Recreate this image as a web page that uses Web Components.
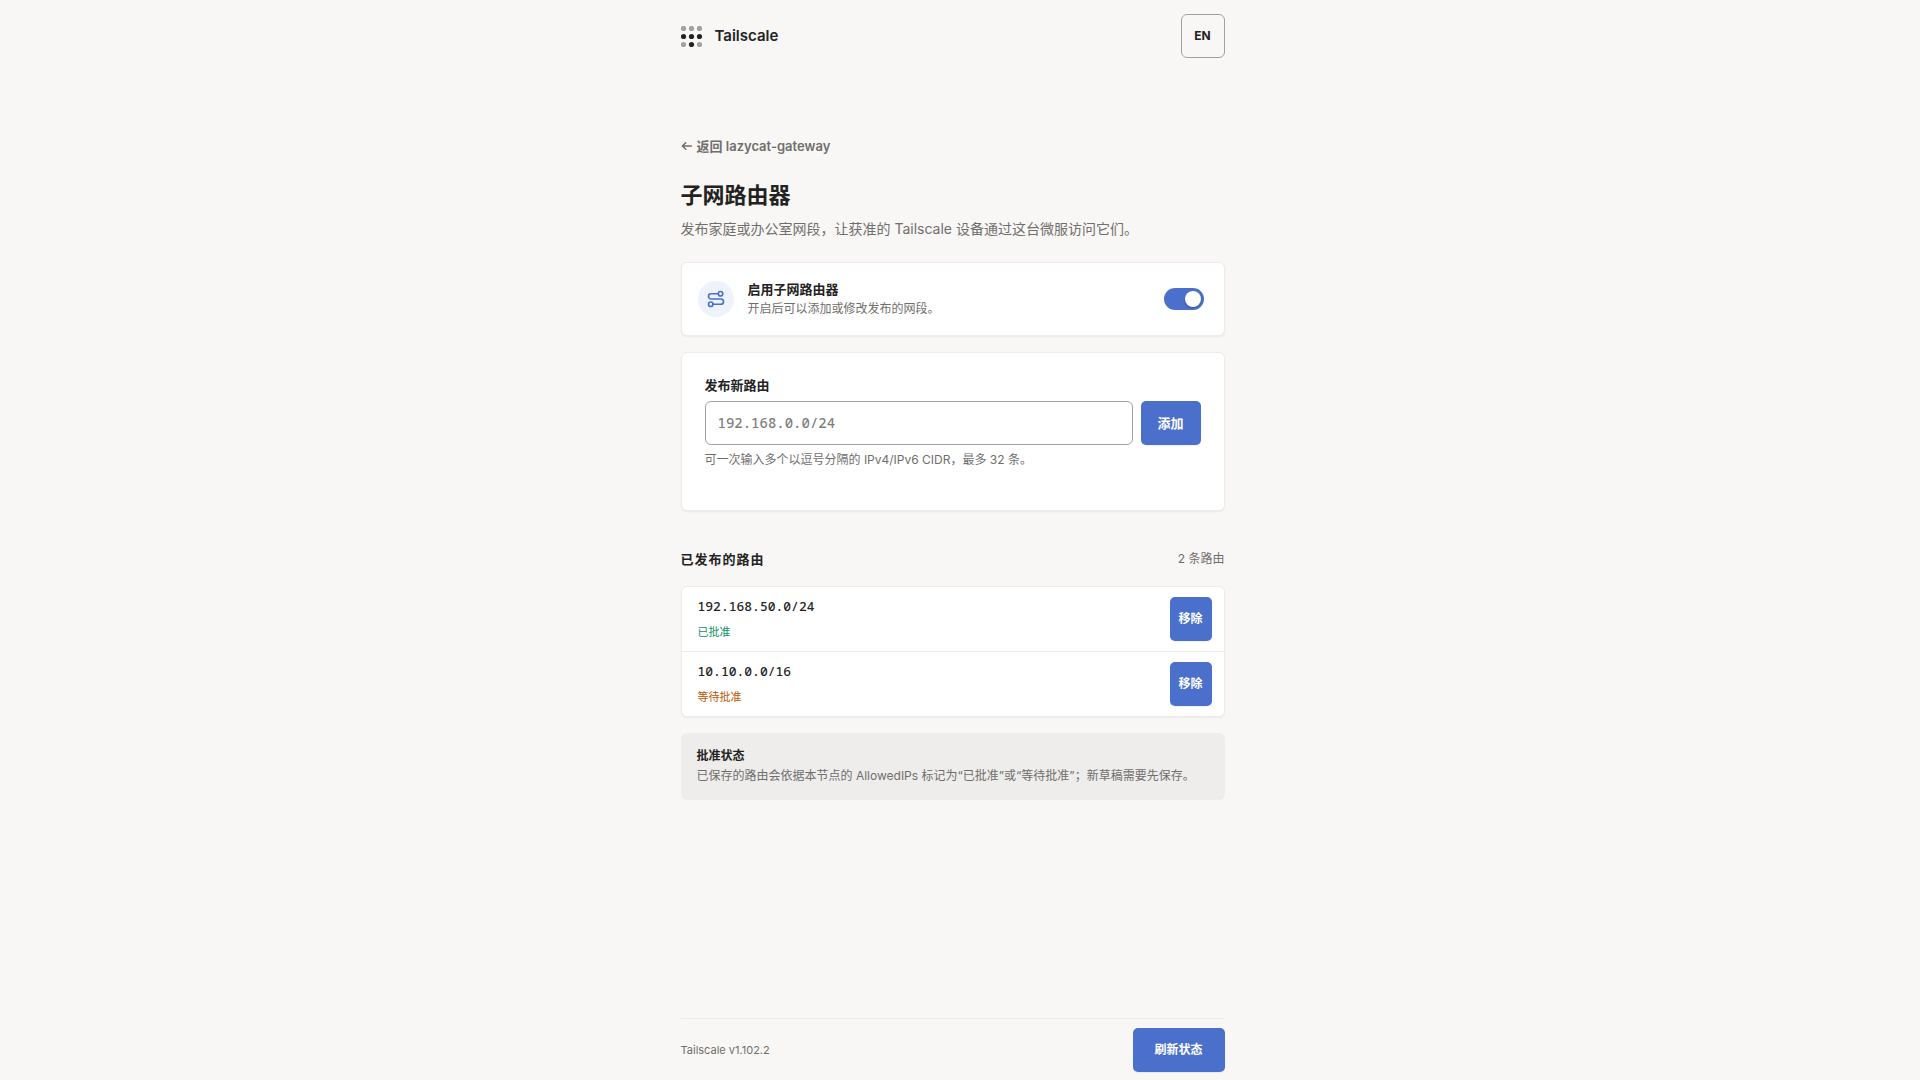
<!DOCTYPE html>
<html lang="zh-CN">
<head>
<meta charset="utf-8">
<meta name="viewport" content="width=device-width, initial-scale=1">
<title>Tailscale</title>
<style>
:root{--bg:#f8f7f5;--text:#232222;--muted:#706e6d;--line:#eeebea;--field:#a3a19f;--blue:#4b70cc;--mono:"Noto Sans Mono","DejaVu Sans Mono",monospace}
html{background:var(--bg)}
body{margin:0;padding-right:15px;background:var(--bg);color:var(--text);font:400 13px/20px Inter,"Noto Sans CJK SC",sans-serif}
</style>
</head>
<body>
<app-shell>
  <top-bar slot="top"></top-bar>
  <page-intro heading="子网路由器">
    <span slot="back">返回 lazycat-gateway</span>
    发布家庭或办公室网段，让获准的 Tailscale 设备通过这台微服访问它们。
  </page-intro>
  <toggle-card heading="启用子网路由器">开启后可以添加或修改发布的网段。</toggle-card>
  <route-form></route-form>
  <route-list heading="已发布的路由" count="2 条路由">
    <route-row cidr="192.168.50.0/24" state="approved">已批准</route-row>
    <route-row cidr="10.10.0.0/16" state="pending">等待批准</route-row>
  </route-list>
  <info-note heading="批准状态">已保存的路由会依据本节点的 AllowedIPs 标记为“已批准”或“等待批准”；新草稿需要先保存。</info-note>
  <page-footer slot="bottom">Tailscale v1.102.2</page-footer>
</app-shell>
<script>
const base = `
*{box-sizing:border-box}
:host{display:block}
h1,h2,p{margin:0}
button{font:600 12px/20px Inter,"Noto Sans CJK SC",sans-serif;height:44px;border:0;border-radius:5px;cursor:pointer}
button.primary{background:var(--blue);color:#fff;box-shadow:0 1px 1px rgba(0,0,0,.06)}
.card{background:#fff;border:1px solid var(--line);border-radius:6px;box-shadow:0 1px 2px rgba(0,0,0,.06)}
`;
function define(name, css, html) {
  customElements.define(name, class extends HTMLElement {
    constructor() {
      super();
      this.attachShadow({mode: 'open'}).innerHTML = `<style>${base}${css}</style>${html(this)}`;
    }
  });
}
const attr = (el, key) => el.getAttribute(key) || '';

define('app-shell', `
:host{display:flex;flex-direction:column;width:min(100% - 32px,544px);min-height:100vh;margin:0 auto}
main{flex:1;display:flex;flex-direction:column;gap:16px;padding:64px 0 32px}
`, () => `<slot name="top"></slot><main><slot></slot></main><slot name="bottom"></slot>`);

define('top-bar', `
header{display:flex;align-items:center;justify-content:space-between;height:72px}
.brand{display:flex;align-items:center;gap:13px;font-size:15px;line-height:22px;font-weight:600}
svg{display:block}
button{width:44px;padding:0;background:transparent;border:1px solid var(--field);border-radius:6px;color:var(--text);font-weight:700}
`, () => `<header><div class="brand">
<svg width="21" height="21" viewBox="0 0 21 21" fill="#232222" aria-hidden="true">
<g opacity=".4"><circle cx="2.5" cy="2.5" r="2.6"/><circle cx="10.5" cy="2.5" r="2.6"/><circle cx="18.5" cy="2.5" r="2.6"/><circle cx="2.5" cy="18.5" r="2.6"/><circle cx="18.5" cy="18.5" r="2.6"/></g>
<circle cx="2.5" cy="10.5" r="2.6"/><circle cx="10.5" cy="10.5" r="2.6"/><circle cx="18.5" cy="10.5" r="2.6"/><circle cx="10.5" cy="18.5" r="2.6"/></svg>
<span>Tailscale</span></div><button type="button">EN</button></header>`);

define('page-intro', `
:host{padding-bottom:6px}
a{display:flex;width:fit-content;align-items:center;gap:4px;color:var(--muted);text-decoration:none;font-weight:600}
h1{margin-top:24px;font-size:22px;line-height:30px;font-weight:700}
p{margin-top:8px;font-size:14px;line-height:22px;color:var(--muted)}
`, el => `<a href="#"><svg width="12" height="12" viewBox="0 0 12 12" fill="none" stroke="currentColor" stroke-width="1.5" stroke-linecap="round" stroke-linejoin="round" aria-hidden="true"><path d="M10.3 6H1.3M4.8 2.7L1.3 6l3.5 3.3"/></svg><slot name="back"></slot></a>
<h1>${attr(el, 'heading')}</h1><p><slot></slot></p>`);

define('toggle-card', `
.card{display:flex;align-items:center;gap:14px;padding:17px 20px 17px 16px}
.icon{display:grid;place-items:center;width:36px;height:36px;border-radius:50%;background:#edf2fb;color:var(--blue)}
label{flex:1}
strong,span{display:block;line-height:19px}
strong{font-weight:600}
span{font-size:12px;color:var(--muted)}
input{appearance:none;display:flex;align-items:center;justify-content:flex-end;width:40px;height:22px;margin:0;padding:3px;border-radius:11px;background:var(--blue);cursor:pointer}
input::before{content:"";width:16px;height:16px;border-radius:50%;background:#fff;box-shadow:0 1px 2px rgba(0,0,0,.25)}
input:not(:checked){justify-content:flex-start;background:var(--field)}
`, el => `<div class="card"><div class="icon"><svg width="18" height="18" viewBox="0 0 24 24" fill="none" stroke="currentColor" stroke-width="2.2" stroke-linecap="round" stroke-linejoin="round" aria-hidden="true"><circle cx="5" cy="19" r="3"/><path d="M8 19h10.500a3.500 3.500 0 0 0 0-7h-13a3.500 3.500 0 0 1 0-7H15"/><circle cx="18" cy="5" r="3"/></svg></div>
<label for="on"><strong>${attr(el, 'heading')}</strong><span><slot></slot></span></label>
<input id="on" type="checkbox" role="switch" checked></div>`);

define('route-form', `
form{padding:22px 23px 40px}
label{display:block;font-weight:600}
.row{display:flex;gap:8px;margin:6px 0 5px}
input{flex:1;min-width:0;height:44px;padding:0 12px 2px;border:1px solid var(--field);border-radius:6px;background:#fff;color:var(--text);font:500 14px/20px var(--mono)}
input::placeholder{color:#807e7d;opacity:1}
button{width:60px;padding:0;font-size:13px}
p{font-size:12px;color:var(--muted)}
`, () => `<form class="card"><label for="cidr">发布新路由</label><div class="row"><input id="cidr" type="text" placeholder="192.168.0.0/24" aria-describedby="hint"><button class="primary" type="button">添加</button></div><p id="hint">可一次输入多个以逗号分隔的 IPv4/IPv6 CIDR，最多 32 条。</p></form>`);

define('route-list', `
:host{padding-top:22px}
header{display:flex;justify-content:space-between;align-items:center;margin-bottom:17px}
h2{font-size:13px;line-height:20px;font-weight:600;letter-spacing:1px}
header span{font-size:12px;color:var(--muted)}
`, el => `<header><h2>${attr(el, 'heading')}</h2><span>${attr(el, 'count')}</span></header><div class="card"><slot></slot></div>`);

define('route-row', `
:host{display:flex;align-items:center;justify-content:space-between;padding:10px 12px 10px 16px}
:host(:not(:last-child)){border-bottom:1px solid var(--line)}
code{display:block;font:500 13px/18px var(--mono);margin-bottom:8px}
span{display:block;font-size:11px;line-height:18px;color:#0d8f66}
:host([state=pending]) span{color:#bb5504}
button{width:42px;padding:0}
`, el => `<div><code>${attr(el, 'cidr')}</code><span><slot></slot></span></div><button class="primary" type="button">移除</button>`);

define('info-note', `
section{padding:13px 16px 14px;border-radius:6px;background:#eeedeb;font-size:12px}
strong{display:block;font-weight:600}
p{color:var(--muted)}
`, el => `<section><strong>${attr(el, 'heading')}</strong><p><slot></slot></p></section>`);

define('page-footer', `
footer{display:flex;align-items:center;justify-content:space-between;padding:9px 0 8px;border-top:1px solid var(--line);font-size:11px;color:var(--muted)}
button{width:92px;padding:0}
`, () => `<footer><span><slot></slot></span><button class="primary" type="button">刷新状态</button></footer>`);
</script>
</body>
</html>
